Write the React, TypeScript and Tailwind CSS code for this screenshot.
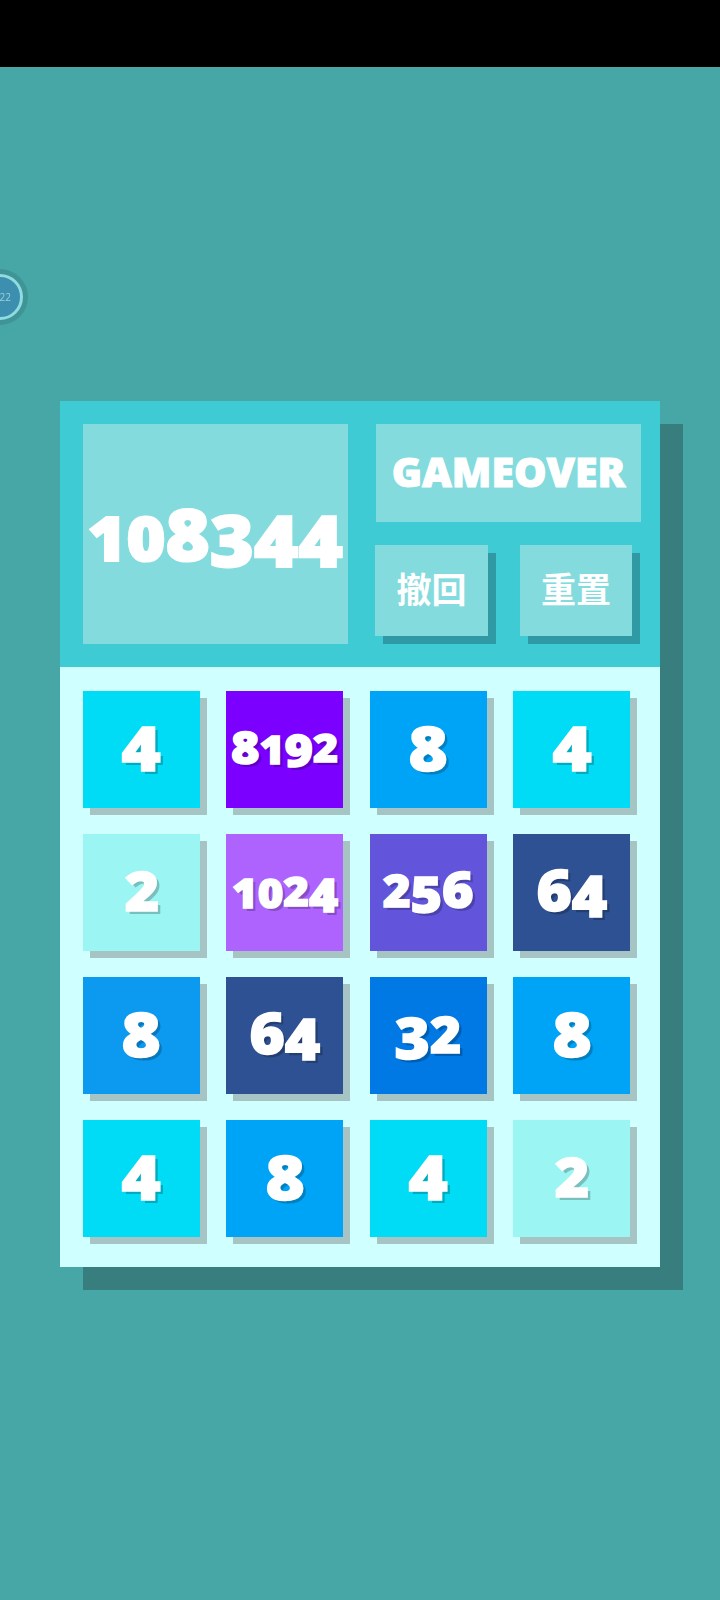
const CELLS: { n: number; bg: string; size: string }[] = [
  { n: 4, bg: "bg-[#00dcf5]", size: "text-[62px]" },
  { n: 8192, bg: "bg-[#7b00ff]", size: "text-[45px]" },
  { n: 8, bg: "bg-[#00a4f6]", size: "text-[62px]" },
  { n: 4, bg: "bg-[#00dcf5]", size: "text-[62px]" },
  { n: 2, bg: "bg-[#9af5f3]", size: "text-[62px]" },
  { n: 1024, bg: "bg-[#ae63ff]", size: "text-[46px]" },
  { n: 256, bg: "bg-[#6255dc]", size: "text-[50px]" },
  { n: 64, bg: "bg-[#2e5193]", size: "text-[56px]" },
  { n: 8, bg: "bg-[#0b9af0]", size: "text-[62px]" },
  { n: 64, bg: "bg-[#2e5193]", size: "text-[56px]" },
  { n: 32, bg: "bg-[#0079e4]", size: "text-[56px]" },
  { n: 8, bg: "bg-[#00a4f6]", size: "text-[62px]" },
  { n: 4, bg: "bg-[#00dcf5]", size: "text-[62px]" },
  { n: 8, bg: "bg-[#00a4f6]", size: "text-[62px]" },
  { n: 4, bg: "bg-[#00dcf5]", size: "text-[62px]" },
  { n: 2, bg: "bg-[#9af5f3]", size: "text-[62px]" },
];

// the game's font has wobbly figures: low ones are smaller, some hang under the line
const DIGIT: Record<string, string> = {
  "0": "text-[0.88em]",
  "1": "text-[0.88em]",
  "2": "text-[0.88em] -translate-y-[0.05em]",
  "3": "translate-y-[0.08em]",
  "4": "translate-y-[0.09em]",
  "5": "translate-y-[0.08em]",
  "6": "-translate-y-[0.02em]",
  "7": "translate-y-[0.08em]",
  "8": "",
  "9": "translate-y-[0.07em]",
};

function Digits({ value }: { value: number }) {
  const s = String(value);
  return (
    <>
      {s.split("").map((d, i) => (
        <span key={i} className={`inline-block ${s.length > 1 || d === "2" ? DIGIT[d] : ""}`}>
          {d}
        </span>
      ))}
    </>
  );
}

export default function App() {
  return (
    <div className="relative w-[720px] h-[1600px] overflow-hidden bg-[#47a6a6] font-['Open_Sans','Noto_Sans_CJK_SC',sans-serif] text-white">
      {/* Status bar */}
      <div className="h-[67px] bg-black" />

      {/* Floating timer */}
      <div className="absolute left-[-28px] top-[269px] w-[56px] h-[56px] rounded-full bg-[#3f9596] flex items-center justify-center blur-[0.5px]">
        <div className="w-[46px] h-[46px] rounded-full border-[3px] border-[#8fdbe0] bg-[#3c8fae] flex items-center justify-end pr-[9px]">
          <span className="text-[10px] text-[#9ccfd8] leading-none">22</span>
        </div>
      </div>

      {/* Board */}
      <div className="ml-[60px] mt-[334px] w-[600px] h-[866px] shadow-[23px_23px_0_#387e7e]">
        {/* Header */}
        <div className="h-[266px] bg-[#3ecbd4] pl-[23px] pt-[23px] flex gap-[28px]">
          <div className="w-[265px] h-[220px] bg-[#84dbdd] flex items-center justify-center">
            <span className="inline-block scale-x-[1.08] text-[70px] font-extrabold leading-none whitespace-nowrap [-webkit-text-stroke:2px_white]">
              <Digits value={108344} />
            </span>
          </div>
          <div className="w-[265px] flex flex-col">
            <div className="h-[98px] pb-[3px] bg-[#84dbdd] flex items-center justify-center">
              <span className="text-[41px] font-extrabold leading-none [-webkit-text-stroke:1px_white]">GAMEOVER</span>
            </div>
            <div className="mt-[23px] flex">
              <button className="ml-[-1px] w-[113px] h-[91px] bg-[#84dbdd] shadow-[8px_8px_0_#2f9aa3] text-[35px] font-bold">撤回</button>
              <button className="ml-[32px] w-[112px] h-[91px] bg-[#84dbdd] shadow-[8px_8px_0_#2f9aa3] text-[35px] font-bold">重置</button>
            </div>
          </div>
        </div>

        {/* Tiles */}
        <div className="h-[600px] bg-[#d0ffff] pl-[23px] pt-[23.7px] grid grid-cols-[repeat(4,117px)] auto-rows-[117px] gap-x-[26.4px] gap-y-[26px]">
          {CELLS.map((c, i) => (
            <div key={i} className={`${c.bg} shadow-[7px_7px_0_#a7c4c5] flex items-center justify-center`}>
              <span className={`${c.size} inline-block scale-x-[1.08] -translate-y-[2px] font-extrabold leading-none whitespace-nowrap [-webkit-text-stroke:1.5px_white] [text-shadow:3px_3px_0_rgba(0,0,0,0.22)]`}>
                <Digits value={c.n} />
              </span>
            </div>
          ))}
        </div>
      </div>
    </div>
  );
}
